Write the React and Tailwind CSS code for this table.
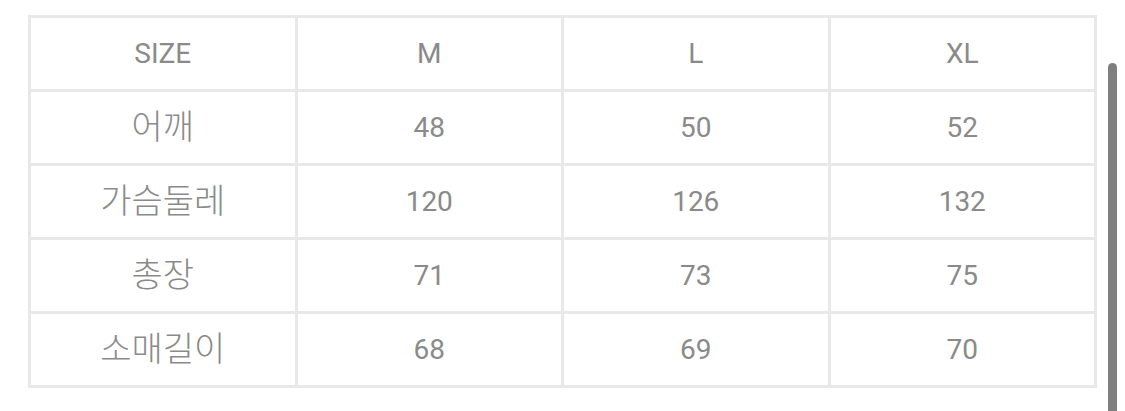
const rows = [
  ['SIZE', 'M', 'L', 'XL'],
  ['어깨', '48', '50', '52'],
  ['가슴둘레', '120', '126', '132'],
  ['총장', '71', '73', '75'],
  ['소매길이', '68', '69', '70'],
];

export default function App() {
  return (
    <div
      className="relative w-[1125px] h-[411px] bg-white overflow-hidden"
      style={{ fontFamily: 'Roboto, "Noto Sans CJK KR", sans-serif' }}
    >
      <div className="pt-[15px] pl-[28px]">
        <div className="grid grid-cols-4 gap-[3px] p-[3px] bg-[#e8e8e8] w-[1069px]">
          {rows.map((row, i) =>
            row.map((cell, j) => (
              <div
                key={`${i}-${j}`}
                className={`h-[71px] bg-white flex items-center justify-center text-[#8a8a8a] ${
                  j === 0 && i > 0 ? 'text-[34px] font-light' : 'text-[28px]'
                }`}
              >
                {cell}
              </div>
            ))
          )}
        </div>
      </div>

      {/* scrollbar */}
      <div className="absolute left-[1108px] top-[63px] w-[9px] h-[360px] rounded-t-full bg-[#7f7f7f]" />
    </div>
  );
}
